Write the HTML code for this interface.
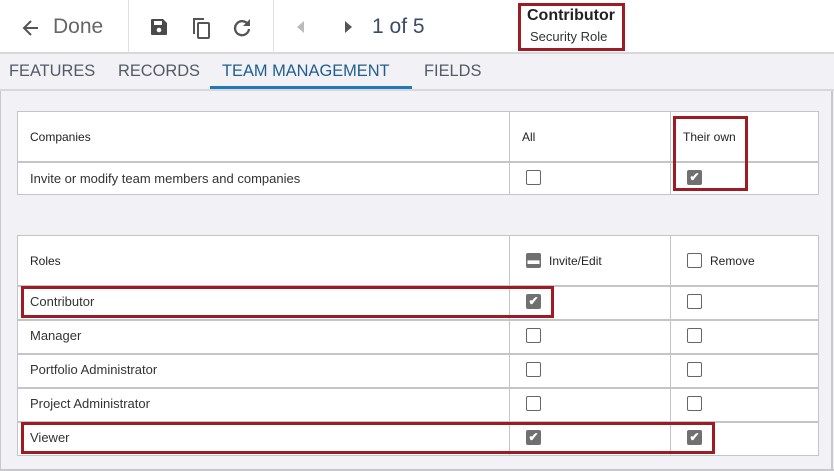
<!DOCTYPE html>
<html><head><style>
*{box-sizing:border-box;margin:0;padding:0}
body{width:834px;height:471px;overflow:hidden;background:#f1f1f6;font-family:"Liberation Sans",sans-serif;position:relative;color:#333}
.a{position:absolute}
.hdr{left:0;top:0;width:834px;height:54px;background:#fff;border-bottom:2px solid #d8d8dc}
.vd{top:0;width:1px;height:53px;background:#e0e0e4}
.tab{top:62px;font-size:16.4px;color:#555a66}
.tbl{background:#fff;border:1px solid #c4c4cc}
.hl{height:2px;background:#c4c4cc;left:0;right:0}
.vl{width:1px;background:#c4c4cc;top:0;bottom:0}
.t{font-size:13px;color:#333}
.th{font-size:12px;color:#222}
.cb{width:15px;height:15px;border:1.3px solid #666;border-radius:2px;background:#fff}
.ck{width:15px;height:15px;border-radius:2px;background:#707070;color:#fff;font-size:12px;line-height:15px;text-align:center;font-weight:bold}
.red{border:3px solid #9e1b24}
</style></head><body>
<div class="a hdr"></div>
<div class="a vd" style="left:128px"></div>
<div class="a vd" style="left:273px"></div>
<svg class="a" style="left:22px;top:19px" width="18" height="18" viewBox="0 0 18 18"><path d="M16 9H3M9 2L2 9l7 7" stroke="#555" stroke-width="2" fill="none"/></svg>
<div class="a" style="left:53px;top:15px;font-size:21px;color:#666">Done</div>
<svg class="a" style="left:149px;top:17px" width="20" height="20" viewBox="0 0 20 20"><path d="M2 3a1 1 0 0 1 1-1h11l4 4v11a1 1 0 0 1-1 1H3a1 1 0 0 1-1-1z" fill="#4a4a4a"/><rect x="5" y="4" width="8" height="4" fill="#fff"/><circle cx="10" cy="13" r="2.3" fill="#fff"/></svg>
<svg class="a" style="left:190px;top:16px" width="22" height="24" viewBox="0 0 22 24"><path d="M4 18V3h10" stroke="#555" stroke-width="2" fill="none"/><rect x="8" y="7" width="11" height="15" rx="1" stroke="#555" stroke-width="2" fill="none"/></svg>
<svg class="a" style="left:233px;top:18px" width="19" height="19" viewBox="0 0 19 19"><path d="M15 6.5A7 7 0 1 0 16 11" stroke="#555" stroke-width="2.3" fill="none"/><path d="M17 1v7h-7z" fill="#555"/></svg>
<svg class="a" style="left:296px;top:20px" width="10" height="14"><path d="M8 1v12L1 7z" fill="#bbb"/></svg>
<svg class="a" style="left:343px;top:20px" width="10" height="14"><path d="M2 1v12l7-6z" fill="#555"/></svg>
<div class="a" style="left:372px;top:15px;font-size:21px;color:#3d4a66">1 of 5</div>
<div class="a red" style="left:518px;top:3px;width:107px;height:48px"></div>
<div class="a" style="left:527px;top:7px;font-size:16px;font-weight:bold;color:#222">Contributor</div>
<div class="a" style="left:530px;top:29px;font-size:13px;color:#333">Security Role</div>

<div class="a tab" style="left:9px">FEATURES</div>
<div class="a tab" style="left:118px">RECORDS</div>
<div class="a tab" style="left:222px;color:#1f5e8f">TEAM MANAGEMENT</div>
<div class="a tab" style="left:424px">FIELDS</div>
<div class="a" style="left:210px;top:86px;width:202px;height:3px;background:#1f7ab8"></div>
<div class="a" style="left:0;top:89px;width:834px;height:2px;background:#d8d8dc"></div>
<div class="a" style="left:0;top:91px;width:1px;height:380px;background:#c8c8cc"></div>
<div class="a" style="left:831px;top:91px;width:2px;height:380px;background:#c8c8cc"></div>
<div class="a" style="left:0;top:469px;width:834px;height:2px;background:#c8c8cc"></div>

<div class="a tbl" style="left:17px;top:111px;width:802px;height:84px">
<div class="a hl" style="top:49px"></div>
<div class="a vl" style="left:491px"></div><div class="a vl" style="left:652px"></div>
</div>
<div class="a th" style="left:30px;top:130px">Companies</div>
<div class="a th" style="left:522px;top:130px">All</div>
<div class="a th" style="left:683px;top:130px">Their own</div>
<div class="a t" style="left:30px;top:171px">Invite or modify team members and companies</div>
<div class="a cb" style="left:526px;top:170px"></div>
<div class="a ck" style="left:687px;top:170px">✔</div>
<div class="a red" style="left:673px;top:116px;width:75px;height:75px"></div>

<div class="a tbl" style="left:17px;top:235px;width:802px;height:221px">
<div class="a hl" style="top:49px"></div>
<div class="a hl" style="top:83px"></div>
<div class="a hl" style="top:117px"></div>
<div class="a hl" style="top:151px"></div>
<div class="a hl" style="top:185px"></div>
<div class="a vl" style="left:491px"></div><div class="a vl" style="left:652px"></div>
</div>
<div class="a th" style="left:30px;top:254px">Roles</div>
<div class="a ck" style="left:526px;top:253px;line-height:14px">▬</div>
<div class="a th" style="left:549px;top:254px">Invite/Edit</div>
<div class="a cb" style="left:687px;top:253px"></div>
<div class="a th" style="left:710px;top:254px">Remove</div>

<div class="a t" style="left:30px;top:294px">Contributor</div>
<div class="a ck" style="left:526px;top:294px">✔</div><div class="a cb" style="left:687px;top:294px"></div>
<div class="a t" style="left:30px;top:328px">Manager</div>
<div class="a cb" style="left:526px;top:328px"></div><div class="a cb" style="left:687px;top:328px"></div>
<div class="a t" style="left:30px;top:362px">Portfolio Administrator</div>
<div class="a cb" style="left:526px;top:362px"></div><div class="a cb" style="left:687px;top:362px"></div>
<div class="a t" style="left:30px;top:396px">Project Administrator</div>
<div class="a cb" style="left:526px;top:396px"></div><div class="a cb" style="left:687px;top:396px"></div>
<div class="a t" style="left:30px;top:430px">Viewer</div>
<div class="a ck" style="left:526px;top:430px">✔</div><div class="a ck" style="left:687px;top:430px">✔</div>
<div class="a red" style="left:21px;top:286px;width:533px;height:32px"></div>
<div class="a red" style="left:21px;top:422px;width:694px;height:32px"></div>
</body></html>
